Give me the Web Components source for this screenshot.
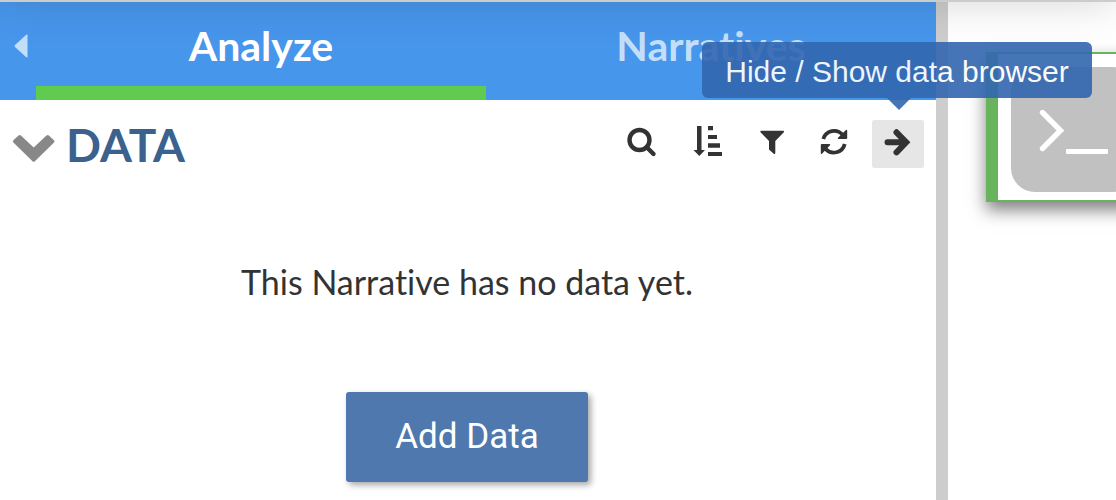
<!DOCTYPE html>
<html lang="en">
<head>
<meta charset="utf-8">
<title>Narrative</title>
<style>
  html, body { height: 100%; margin: 0; }
  body { font-family: Lato, "Noto Sans", sans-serif; font-variant-ligatures: none; color: #333; background: #fff; overflow: hidden; }
</style>
</head>
<body>
<narrative-app>
  <side-panel slot="panel">
    <panel-tabs slot="tabs"></panel-tabs>
    <data-section>
      <panel-tool slot="tools" label="Search data"><svg viewBox="0 0 32 32" width="32" height="32"><circle cx="13.500" cy="14" r="10" fill="none" stroke="#333" stroke-width="4.400"/><path d="M21 21.500L27.500 28" stroke="#333" stroke-width="4.400" stroke-linecap="round"/></svg></panel-tool>
      <panel-tool slot="tools" label="Sort data"><svg viewBox="0 0 32 32" width="32" height="32" fill="#333"><path d="M7 0h4.500v24H15L9.300 30 3.500 24H7zM18 0h5v4.300h-5zM18 9h9v4h-9zM18 17.300h12v4.400h-12zM18 26h15v4h-15z"/></svg></panel-tool>
      <panel-tool slot="tools" label="Filter data"><svg viewBox="0 0 32 32" width="32" height="32" fill="#333"><path d="M7.300 4.700h22q1.300 0.500 0.300 1.700L21.300 15v12q-0.300 1.800-1.600 0.700L15 23.500V15L6.700 6.400Q5.700 5.200 7.300 4.700z"/></svg></panel-tool>
      <panel-tool slot="tools" label="Refresh data"><svg viewBox="0 0 32 32" width="32" height="32"><path d="M5.300 13A11.200 11.200 0 0 1 24.600 8.800M26.700 18A11.200 11.200 0 0 1 7.400 22.800" fill="none" stroke="#333" stroke-width="3.800"/><path d="M28 3.900q1.200-0.800 1.200 0.800V12q0 1-1 1h-7.600q-1.600-0.200-0.600-1.300zM4 27.700q-1.200 0.800-1.200-0.800V19q0-1 1-1h7.600q1.600 0.200 0.600 1.300z" fill="#333"/></svg></panel-tool>
      <panel-tool slot="tools" label="Hide / Show data browser" active><svg viewBox="0 0 32 32" width="32" height="32"><path d="M5.500 16.300H23M14.500 6.300L24.200 16.300 14.500 26.300" fill="none" stroke="#333" stroke-width="6" stroke-linecap="round" stroke-linejoin="miter"/></svg></panel-tool>
    </data-section>
  </side-panel>
  <code-cell slot="workspace"></code-cell>
</narrative-app>
<script>
const define = (name, html, setup) => customElements.define(name, class extends HTMLElement {
  constructor() {
    super();
    this.attachShadow({ mode: "open" }).innerHTML = html;
  }
  connectedCallback() { if (setup) setup(this); }
});

define("narrative-app", `
  <style>
    :host { display: flex; flex-direction: column; height: 100%; }
    header { position: relative; z-index: 1; height: 2px; flex: none; background: #ccc; }
    header::after { content: ""; position: absolute; left: 0; right: 0; bottom: 0; height: 60px; box-shadow: 0 0 40px rgba(60,60,60,.22); pointer-events: none; }
    main { flex: 1; display: grid; grid-template-columns: minmax(0,1fr) 12px 168px; }
    .divider { background: #cdcdcd; }
    .work { overflow: hidden; padding: 50px 0 20px 38px; min-width: 0; }
  </style>
  <header></header>
  <main>
    <div class="left"><slot name="panel"></slot></div>
    <div class="divider"></div>
    <div class="work"><slot name="workspace"></slot></div>
  </main>`);

define("side-panel", `
  <style>:host { display: block; }</style>
  <slot name="tabs"></slot><slot></slot>`);

define("panel-tabs", `
  <style>
    :host { display: grid; grid-template-columns: 36px 1fr 1fr; height: 98px; background: #4696ec; }
    button { font: bold 41px/48px Lato, sans-serif; font-variant-ligatures: none; color: #c3def9; background: none; border: 0;
      border-bottom: 14px solid transparent; padding: 4px 0 0; margin: 0; }
    .selected { color: #fff; border-color: #60cb4e; }
    .fold { display: flex; align-items: center; padding: 4px 0 0 14px; }
    svg { display: block; }
  </style>
  <button class="fold" aria-label="Collapse panel"><svg width="14" height="24" viewBox="0 0 14 24"><path d="M12.500 0.500Q13.500 0.500 13.500 1.500V22.500Q13.500 24 12 23L1 13Q0 12 1 11z" fill="#c3def9"/></svg></button>
  <button class="selected">Analyze</button>
  <button>Narratives</button>`);

define("data-section", `
  <style>
    :host { display: block; }
    .head { display: flex; align-items: center; justify-content: space-between; padding: 12px 12px 0; height: 64px; }
    h2 { display: flex; align-items: center; gap: 10px; margin: 0; padding-top: 2px; font: bold 46px/56px Lato, sans-serif; color: #3b628e; }
    h2 svg { margin-top: 4px; }
    .tools { display: flex; gap: 12px; }
    .body { display: flex; flex-direction: column; align-items: center; padding: 82px 2px 0 0; gap: 86px; }
    p { margin: 0; font-size: 34px; line-height: 48px; }
    button { border: 0; border-radius: 3px; background: #4f78ae; color: #fff; font: 400 35px/50px Roboto, sans-serif;
      width: 242px; padding: 20px 0; box-shadow: 3px 3px 6px rgba(0,0,0,.35); }
  </style>
  <div class="head">
    <h2><svg width="44" height="32" viewBox="0 0 44 32"><path d="M1.400 9.200L6.500 4.500Q7.700 3.500 8.900 4.500L21.700 16.500 34.500 4.500Q35.700 3.500 36.900 4.500L42 9.200Q43.200 10.400 42 11.600L22.900 30.200Q21.700 31.200 20.500 30.200L1.400 11.600Q0.200 10.400 1.400 9.200z" fill="#888"/></svg>DATA</h2>
    <div class="tools"><slot name="tools"></slot></div>
  </div>
  <div class="body">
    <p>This Narrative has no data yet.</p>
    <button>Add Data</button>
  </div>`);

define("panel-tool", `
  <style>
    :host { display: block; position: relative; }
    :host([active]) { z-index: 2; }
    button { display: grid; place-items: center; width: 52px; height: 48px; padding: 0 0 4px; border: 0; border-radius: 3px; background: none; }
    :host([active]) button { background: #e6e6e6; }
    .tip { display: none; }
    :host([active]) .tip { display: block; position: absolute; left: 50%; bottom: calc(100% + 22px); margin-left: -196px;
      box-sizing: border-box; width: 390px; padding: 10px 0 6px; text-align: center; white-space: nowrap; border-radius: 6px;
      background: #3367b0; color: #fff; opacity: .9; font: 30px/40px "Liberation Sans", Arial, sans-serif; }
    .tip::after { content: ""; position: absolute; top: 100%; left: 50%; margin-left: -10px; border: 12px solid transparent;
      border-top-color: #3367b0; border-bottom: 0; }
  </style>
  <button><slot></slot></button>
  <div class="tip" role="tooltip"></div>`,
  el => {
    el.shadowRoot.querySelector("button").setAttribute("aria-label", el.getAttribute("label"));
    if (el.hasAttribute("active")) el.shadowRoot.querySelector(".tip").textContent = el.getAttribute("label");
  });

define("code-cell", `
  <style>
    :host { display: block; border: 2px solid #69b35f; border-left-width: 12px; background: #fff; margin-right: -40px;
      padding: 13px 0 8px 13px; box-shadow: 0 8px 16px rgba(0,0,0,.5); }
    svg { display: block; }
  </style>
  <svg width="125" height="125" viewBox="0 0 125 125"><rect width="125" height="125" rx="24" fill="#c1c1c1"/><path d="M31.500 45.500L49.500 63.500 31.500 81.500" fill="none" stroke="#fff" stroke-width="5.400" stroke-linecap="round"/><rect x="55" y="82" width="42" height="5" rx="1" fill="#fff"/></svg>`);
</script>
</body>
</html>
